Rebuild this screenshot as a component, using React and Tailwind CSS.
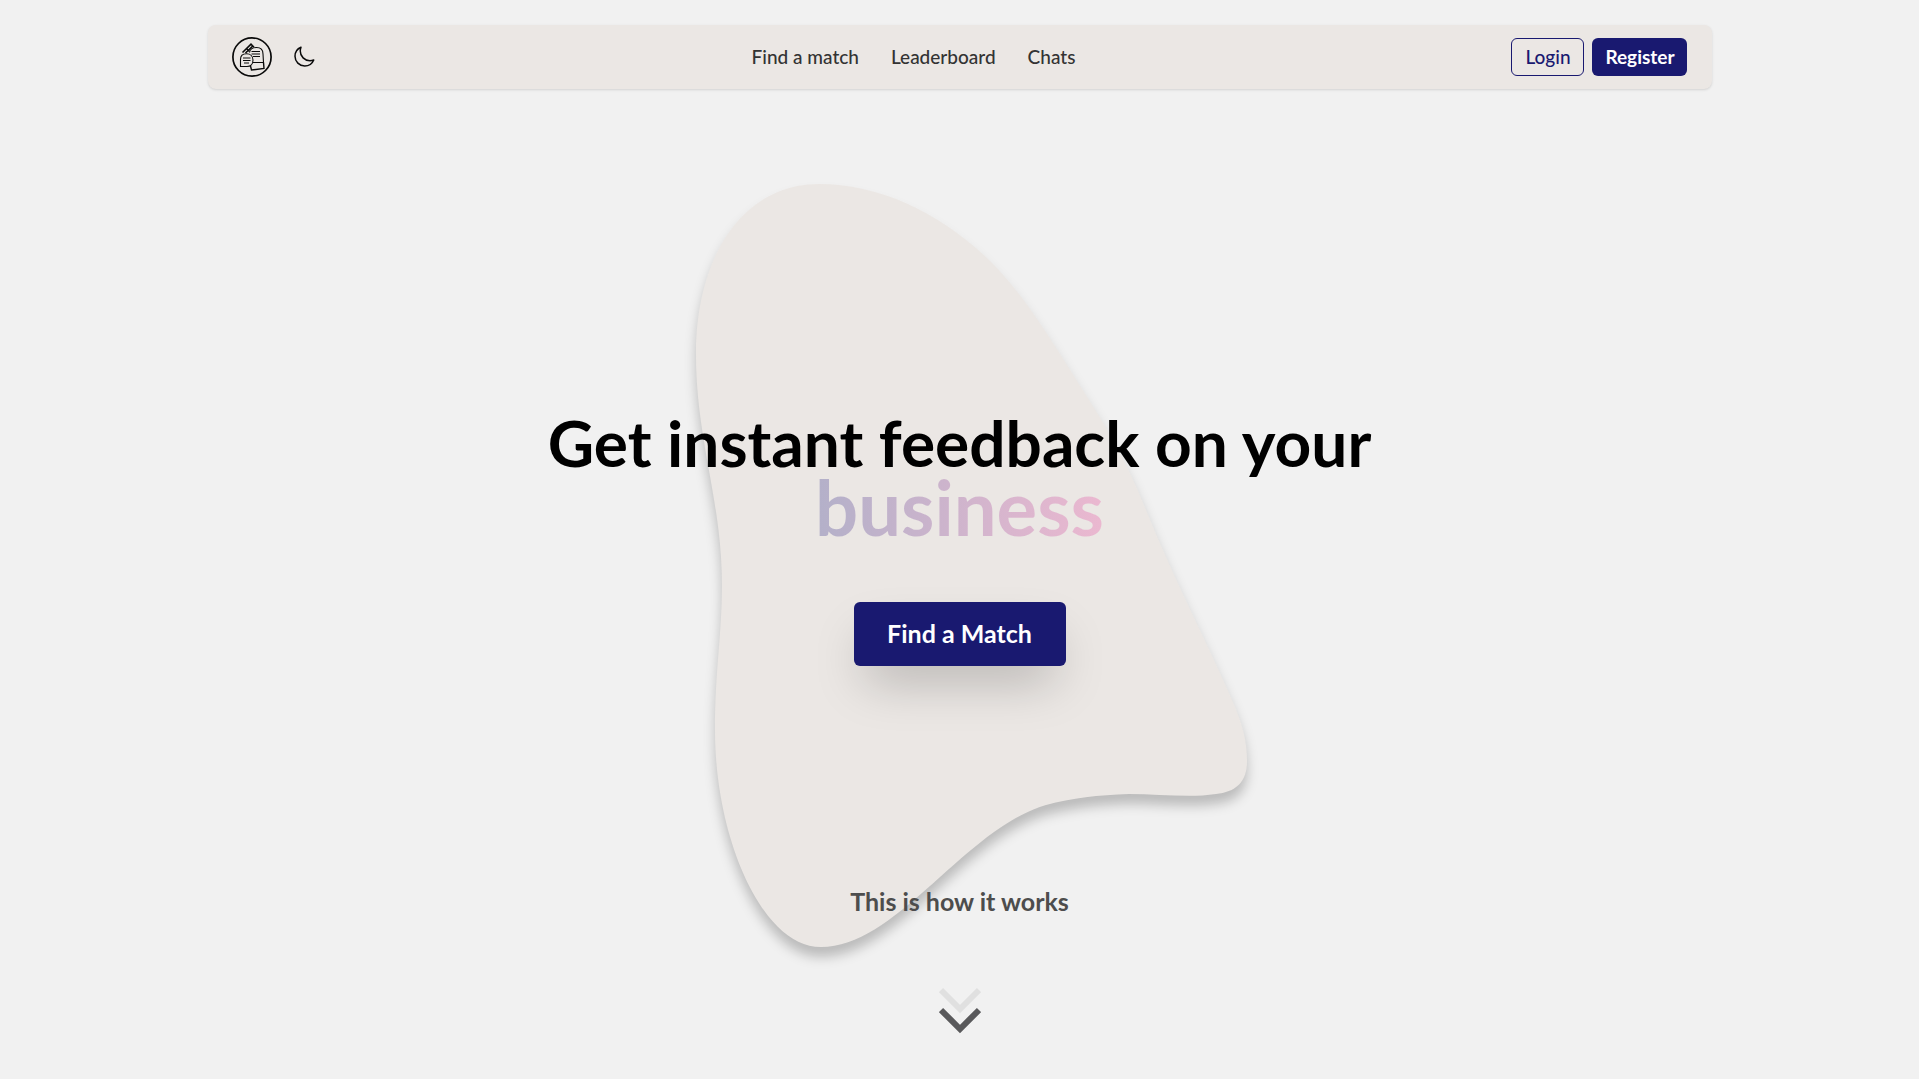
const navLinks = ["Find a match", "Leaderboard", "Chats"];

function Logo() {
  return (
    <svg viewBox="0 0 40 40" className="size-10" fill="none" stroke="#0a0a0a" aria-hidden="true">
      <circle cx="20" cy="20" r="19.1" strokeWidth="1.7" />
      <path d="M10.5 15.5 L19 7.2 L22 10.2 M13.5 16 L20.5 9.2 M15 12 L17.5 14.5" strokeWidth="1.6" />
      <path d="M17.5 15.5 C18 12 21 10.5 24.5 10.5 C29 10.5 31 13.5 31 17 L31.5 25.5 L21 25.5" strokeWidth="1.1" />
      <path d="M19.5 14.5 H28 M19.5 17 H28 M21 19.5 H28" strokeWidth="1.1" />
      <path d="M8.5 29.5 L8.5 22.5 C8.5 18.5 11 16.8 14.5 16.8 C18.5 16.8 21 19.5 21 23 C21 27 18.5 29.5 15 29.5 Z" strokeWidth="1.1" />
      <path d="M11 21 H18.5 M11 23.5 H18.5 M12 26 H17" strokeWidth="1" />
      <path d="M18.5 29 L19.5 33 L32 31.5 L31.5 25.5" strokeWidth="1.4" />
    </svg>
  );
}

function Moon() {
  return (
    <svg viewBox="0 0 24 24" className="size-6" fill="none" stroke="#0a0a0a" strokeWidth="1.5" strokeLinecap="round" strokeLinejoin="round" aria-hidden="true">
      <path d="M21.75 15A9.72 9.72 0 0 1 18 15.75c-5.385 0-9.75-4.365-9.75-9.75 0-1.33.266-2.597.748-3.752A9.753 9.753 0 0 0 3 11.25C3 16.635 7.365 21 12.75 21a9.753 9.753 0 0 0 9.002-5.998Z" />
    </svg>
  );
}

function Blob() {
  return (
    <svg
      viewBox="660 160 600 820"
      className="absolute inset-x-0 top-[71px] mx-auto w-[600px] overflow-visible drop-shadow-[0px_10px_6px_rgba(0,0,0,0.22)]"
      aria-hidden="true"
    >
      <path
        fill="#ebe7e4"
        d="M819 184 C878 184 937 211 986 257 C1023 292 1053 343 1084 392 C1109 431 1128 465 1146 510 C1174 580 1206 640 1232 700 C1243 725 1247 742 1247 761 C1247 783 1235 792 1216 794 C1190 798 1160 794 1129 794 C1098 795 1072 798 1046 805 C964 829 897 947 821 947 C762 947 715 838 715 730 C715 670 722 635 722 585 C722 500 696 440 696 354 C696 255 744 184 819 184 Z"
      />
    </svg>
  );
}

function Arrows() {
  return (
    <svg viewBox="0 0 42 48" className="h-12 w-[42px]" fill="none" strokeWidth="6" aria-hidden="true">
      <path d="M2 3 L21 22 L40 3" stroke="#e0e0e0" />
      <path d="M2 23 L21 42 L40 23" stroke="#59595b" />
    </svg>
  );
}

export default function App() {
  return (
    <div className="flex min-h-screen flex-col bg-[#f1f1f1] font-['Lato',sans-serif] text-black">
      <header className="mx-auto w-full max-w-[1536px] px-4 pt-[25px]">
        <nav className="flex h-16 items-center justify-between rounded-lg bg-[#ebe7e4] px-6 shadow-sm">
          <div className="flex items-center gap-5">
            <a href="#" aria-label="Home"><Logo /></a>
            <button type="button" aria-label="Toggle dark mode"><Moon /></button>
          </div>
          <div className="flex items-center gap-8 text-[19px] font-medium text-[#333]">
            {navLinks.map((label) => (
              <a key={label} href="#">{label}</a>
            ))}
          </div>
          <div className="flex items-center gap-2 text-[19px] leading-6">
            <button type="button" className="h-[38px] w-[73px] rounded-md border border-[#191970] font-medium text-[#191970]">Login</button>
            <button type="button" className="h-[38px] w-[95px] rounded-md bg-[#191970] font-bold text-white">Register</button>
          </div>
        </nav>
      </header>

      <main className="relative flex grow flex-col items-center">
        <Blob />
        <div className="relative mt-[326px] flex flex-col items-center">
          <h1 className="flex flex-col items-center text-center font-bold">
            <span className="text-[64px] leading-[56px]">Get instant feedback on your</span>
            <span className="bg-linear-to-r from-[#b3b0c9] to-[#ebb8d0] bg-clip-text text-[76px] leading-[72px] text-transparent">business</span>
          </h1>
          <button type="button" className="mt-[59px] h-16 w-[212px] rounded-md bg-[#191970] text-[25px] font-bold text-white shadow-2xl">Find a Match</button>
        </div>
        <div className="relative mt-[219px] flex flex-col items-center gap-[70px]">
          <h2 className="text-[25px] leading-8 font-bold text-[#4d4d4d]">This is how it works</h2>
          <Arrows />
        </div>
      </main>
    </div>
  );
}
